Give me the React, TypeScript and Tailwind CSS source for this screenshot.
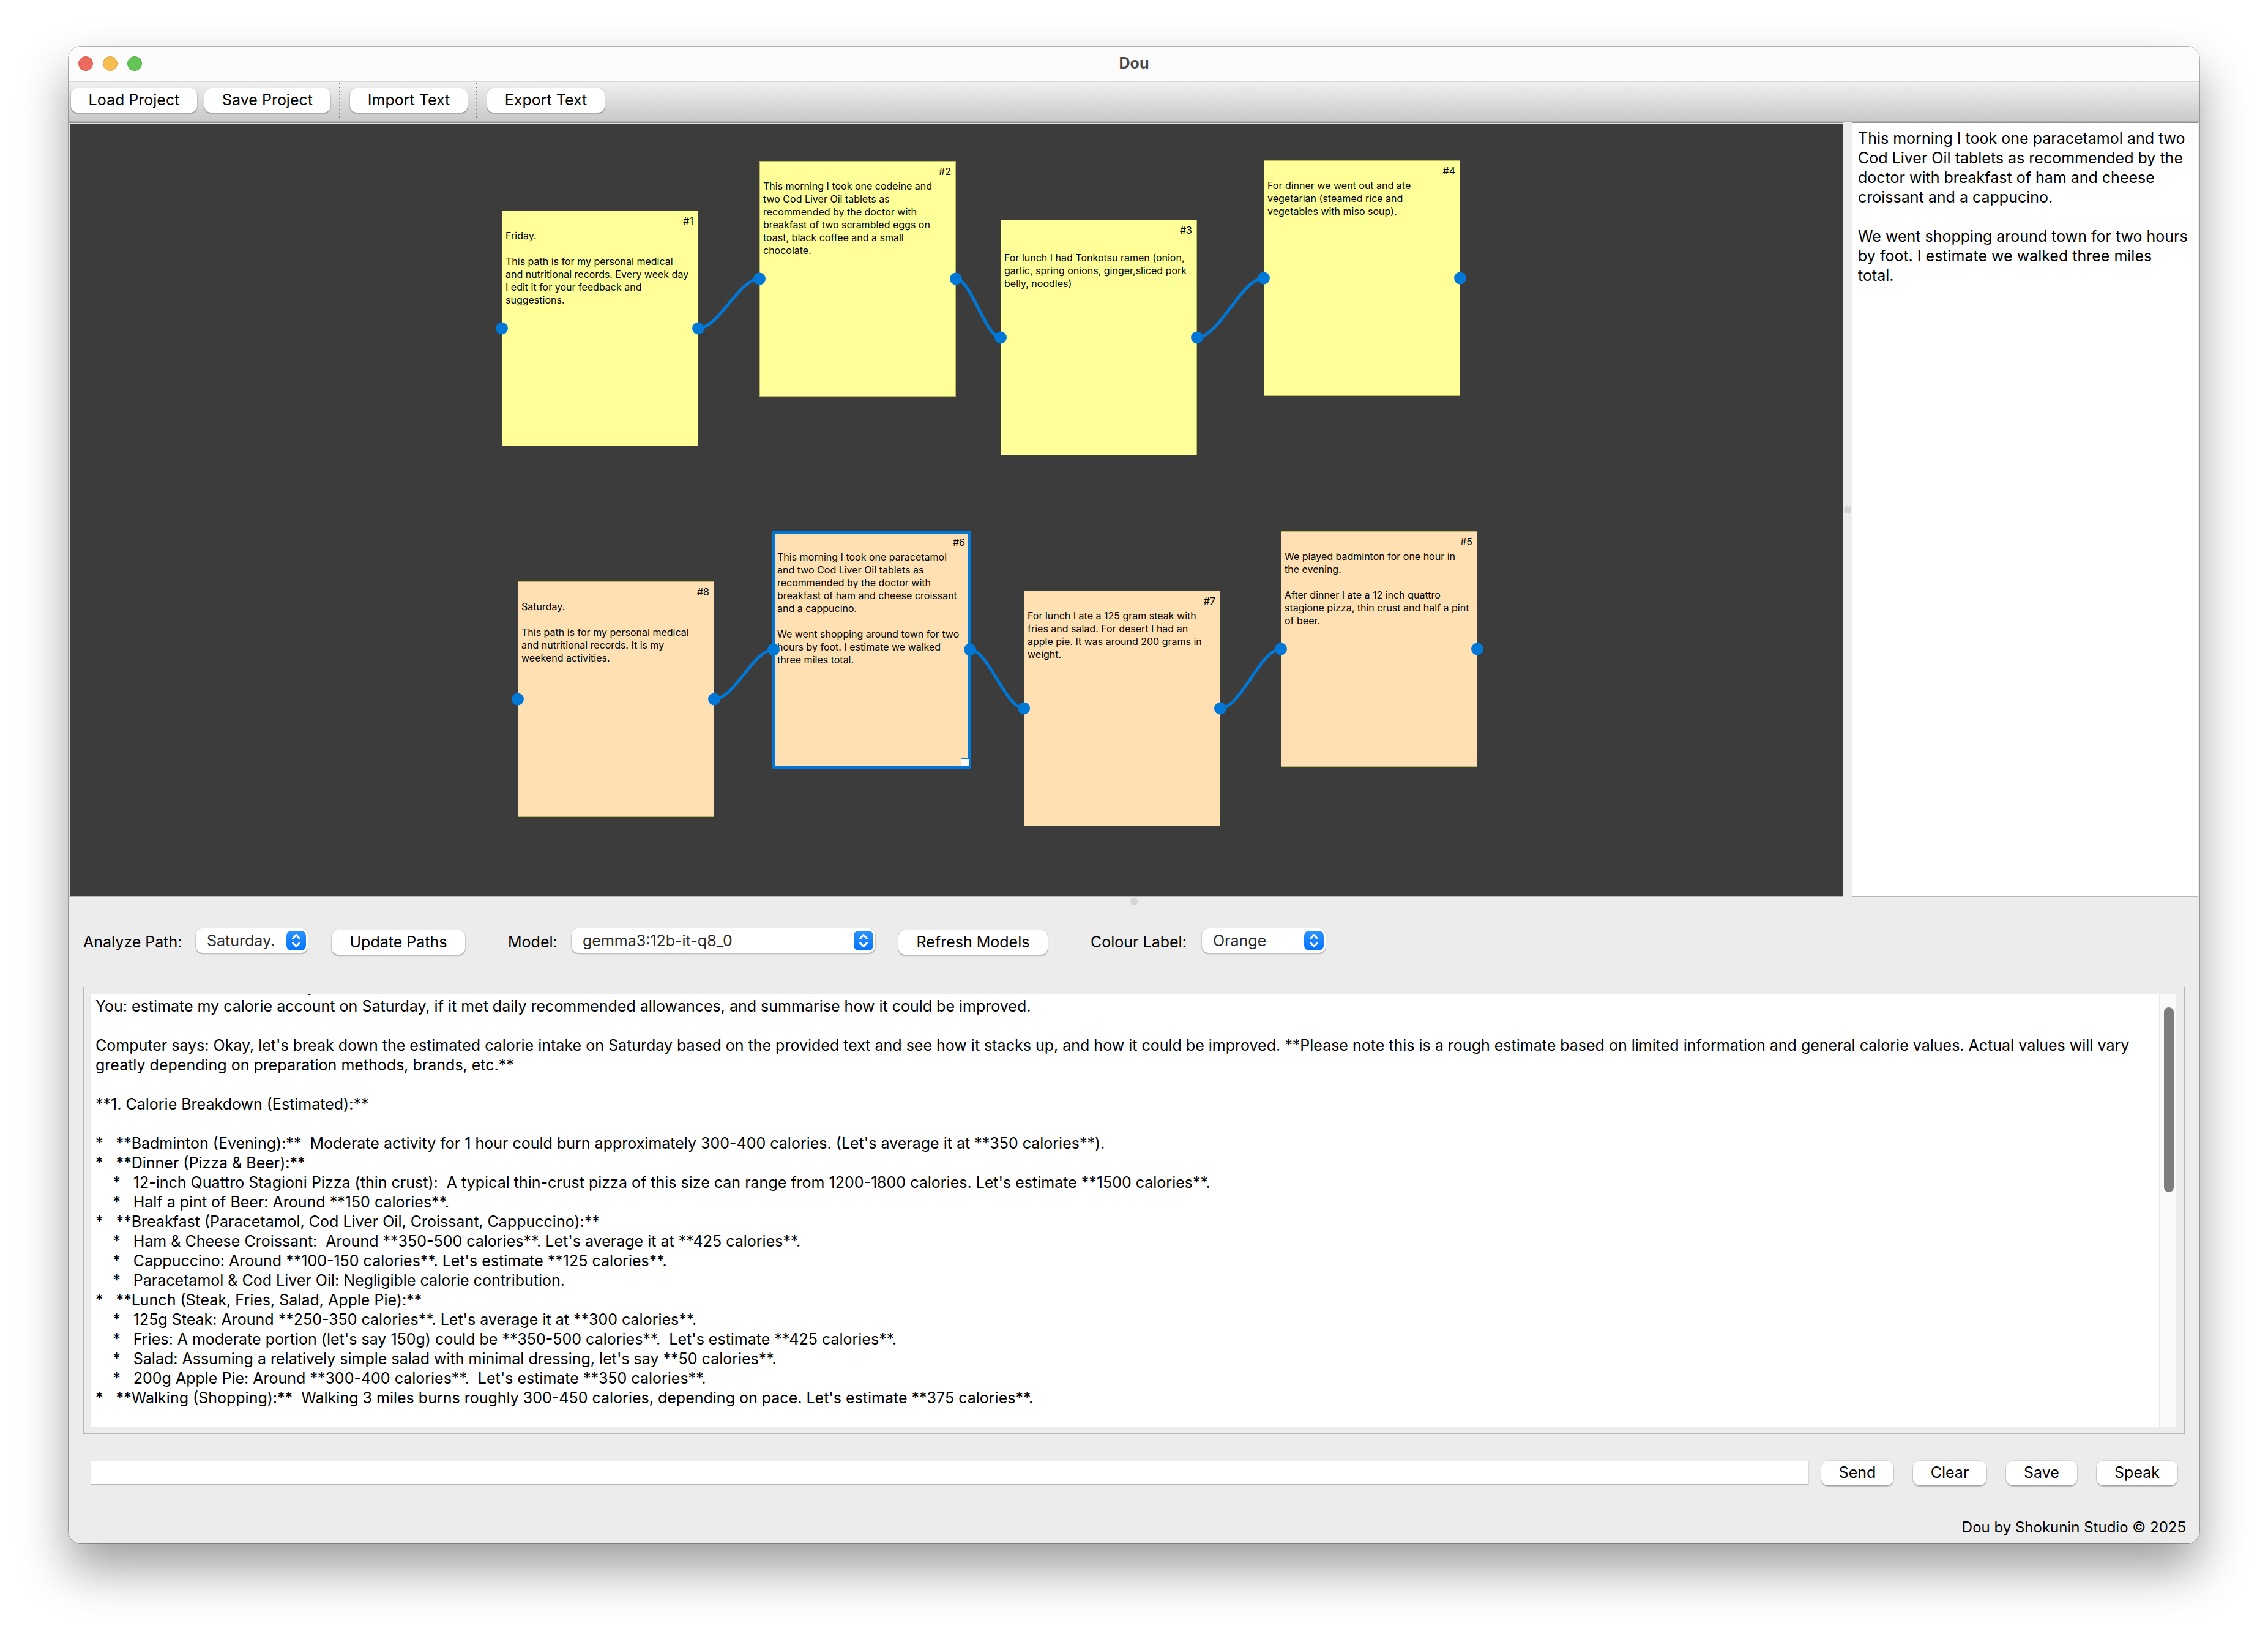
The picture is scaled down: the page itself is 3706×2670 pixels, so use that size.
import React from "react";

type Note = {
  id: number;
  x: number;
  y: number;
  tone: "yellow" | "orange";
  text: string;
  selected?: boolean;
};

const NOTE_W = 321;
const NOTE_H = 385;

const notes: Note[] = [
  {
    id: 1,
    x: 707,
    y: 143,
    tone: "yellow",
    text: "Friday.\n\nThis path is for my personal medical\nand nutritional records. Every week day\nI edit it for your feedback and\nsuggestions.",
  },
  {
    id: 2,
    x: 1128,
    y: 62,
    tone: "yellow",
    text: "This morning I took one codeine and\ntwo Cod Liver Oil tablets as\nrecommended by the doctor with\nbreakfast of two scrambled eggs on\ntoast, black coffee and a small\nchocolate.",
  },
  {
    id: 3,
    x: 1522,
    y: 158,
    tone: "yellow",
    text: "\nFor lunch I had Tonkotsu ramen (onion,\ngarlic, spring onions, ginger,sliced pork\nbelly, noodles)",
  },
  {
    id: 4,
    x: 1952,
    y: 61,
    tone: "yellow",
    text: "For dinner we went out and ate\nvegetarian (steamed rice and\nvegetables with miso soup).",
  },
  {
    id: 8,
    x: 733,
    y: 749,
    tone: "orange",
    text: "Saturday.\n\nThis path is for my personal medical\nand nutritional records. It is my\nweekend activities.",
  },
  {
    id: 6,
    x: 1151,
    y: 668,
    tone: "orange",
    selected: true,
    text: "This morning I took one paracetamol\nand two Cod Liver Oil tablets as\nrecommended by the doctor with\nbreakfast of ham and cheese croissant\nand a cappucino.\n\nWe went shopping around town for two\nhours by foot. I estimate we walked\nthree miles total.",
  },
  {
    id: 7,
    x: 1560,
    y: 764,
    tone: "orange",
    text: "For lunch I ate a 125 gram steak with\nfries and salad. For desert I had an\napple pie. It was around 200 grams in\nweight.",
  },
  {
    id: 5,
    x: 1980,
    y: 667,
    tone: "orange",
    text: "We played badminton for one hour in\nthe evening.\n\nAfter dinner I ate a 12 inch quattro\nstagione pizza, thin crust and half a pint\nof beer.",
  },
];

const links: [number, number][] = [
  [1, 2],
  [2, 3],
  [3, 4],
  [8, 6],
  [6, 7],
  [7, 5],
];

const selectedText =
  "This morning I took one paracetamol and two Cod Liver Oil tablets as recommended by the doctor with breakfast of ham and cheese croissant and a cappucino.\n\nWe went shopping around town for two hours by foot. I estimate we walked three miles total.";

const chat = [
  "You: estimate my calorie account on Saturday, if it met daily recommended allowances, and summarise how it could be improved.",
  "",
  "Computer says: Okay, let's break down the estimated calorie intake on Saturday based on the provided text and see how it stacks up, and how it could be improved. **Please note this is a rough estimate based on limited information and general calorie values. Actual values will vary greatly depending on preparation methods, brands, etc.**",
  "",
  "**1. Calorie Breakdown (Estimated):**",
  "",
  "*   **Badminton (Evening):**  Moderate activity for 1 hour could burn approximately 300-400 calories. (Let's average it at **350 calories**).",
  "*   **Dinner (Pizza & Beer):**",
  "    *   12-inch Quattro Stagioni Pizza (thin crust):  A typical thin-crust pizza of this size can range from 1200-1800 calories. Let's estimate **1500 calories**.",
  "    *   Half a pint of Beer: Around **150 calories**.",
  "*   **Breakfast (Paracetamol, Cod Liver Oil, Croissant, Cappuccino):**",
  "    *   Ham & Cheese Croissant:  Around **350-500 calories**. Let's average it at **425 calories**.",
  "    *   Cappuccino: Around **100-150 calories**. Let's estimate **125 calories**.",
  "    *   Paracetamol & Cod Liver Oil: Negligible calorie contribution.",
  "*   **Lunch (Steak, Fries, Salad, Apple Pie):**",
  "    *   125g Steak: Around **250-350 calories**. Let's average it at **300 calories**.",
  "    *   Fries: A moderate portion (let's say 150g) could be **350-500 calories**.  Let's estimate **425 calories**.",
  "    *   Salad: Assuming a relatively simple salad with minimal dressing, let's say **50 calories**.",
  "    *   200g Apple Pie: Around **300-400 calories**.  Let's estimate **350 calories**.",
  "*   **Walking (Shopping):**  Walking 3 miles burns roughly 300-450 calories, depending on pace. Let's estimate **375 calories**.",
].join("\n");

function PushButton({ className = "", children }: { className?: string; children: React.ReactNode }) {
  return (
    <button
      type="button"
      className={`h-10 shrink-0 rounded-[11px] bg-white pb-[2px] text-center whitespace-nowrap text-black shadow-[0_0_0_1px_rgba(0,0,0,0.08),0_2px_2px_rgba(0,0,0,0.26)] ${className}`}
    >
      {children}
    </button>
  );
}

function Combo({ id, options, className }: { id: string; options: string[]; className: string }) {
  return (
    <div className={`relative h-10 shrink-0 self-start ${className}`}>
      <select
        id={id}
        className="h-full w-full appearance-none rounded-[11px] bg-white pr-10 pl-[18px] text-[#2b2b2b] shadow-[0_0_0_1px_rgba(0,0,0,0.08),0_2px_2px_rgba(0,0,0,0.26)]"
      >
        {options.map((o) => (
          <option key={o}>{o}</option>
        ))}
      </select>
      <span className="pointer-events-none absolute top-1 right-[3px] size-8 rounded-[8px] bg-gradient-to-b from-[#2b92ff] to-[#0073ff]">
        <svg viewBox="0 0 32 32" className="size-8" fill="none" stroke="white" strokeWidth="3" strokeLinecap="round" strokeLinejoin="round" aria-hidden="true">
          <path d="M10.5 12.5 16 6.5l5.5 6M10.5 19.5 16 25.500l5.500-6" />
        </svg>
      </span>
    </div>
  );
}

function NoteCard({ note }: { note: Note }) {
  const fill = note.tone === "yellow" ? "bg-[#ffff99]" : "bg-[#ffe0b2]";
  return (
    <article
      className={`absolute h-[385px] w-[321px] border border-[#b9b960] ${fill} text-[16px] leading-[21px] text-black`}
      style={{ left: note.x, top: note.y }}
    >
      <p className="pt-[6px] pr-[7px] text-right">#{note.id}</p>
      <p className="pt-[3px] pl-[5px] whitespace-pre">{note.text}</p>
      {note.selected && (
        <>
          <span className="absolute -inset-[3px] rounded-[2px] border-[5px] border-[#0078d7]" />
          <span className="absolute right-0 bottom-0 size-[14px] border border-[#0078d7] bg-white" />
        </>
      )}
    </article>
  );
}

function Canvas() {
  const find = (id: number) => notes.find((n) => n.id === id)!;
  return (
    <section
      aria-label="Notes canvas"
      className="relative min-h-[1180px] min-w-0 flex-1 overflow-hidden border border-[#b5b5b5] border-t-[#8e8e8e] bg-[#3c3c3c] shadow-[inset_1px_1px_0_#e4e4e4]"
    >
      {notes.map((n) => (
        <NoteCard key={n.id} note={n} />
      ))}
      <svg className="pointer-events-none absolute top-0 left-0 h-full w-full" fill="none" aria-hidden="true">
        {links.map(([a, b]) => {
          const x0 = find(a).x + NOTE_W;
          const y0 = find(a).y + NOTE_H / 2;
          const x1 = find(b).x;
          const y1 = find(b).y + NOTE_H / 2;
          const c = (x1 - x0) / 3;
          return (
            <path
              key={`${a}-${b}`}
              d={`M${x0} ${y0}C${x0 + c} ${y0} ${x1 - c} ${y1} ${x1} ${y1}`}
              stroke="#0078d7"
              strokeWidth="5"
            />
          );
        })}
        {notes.map((n) => (
          <g key={n.id} fill="#0078d7">
            <circle cx={n.x} cy={n.y + NOTE_H / 2} r="10" />
            <circle cx={n.x + NOTE_W} cy={n.y + NOTE_H / 2} r="10" />
          </g>
        ))}
      </svg>
    </section>
  );
}

function ToolbarDivider() {
  return <span className="mt-[2px] h-14 w-[2px] bg-[repeating-linear-gradient(#777777_0_2px,transparent_2px_6px)]" />;
}

export default function App() {
  return (
    <div className="flex min-h-screen bg-white px-28 pt-[76px] pb-[148px] font-['Inter',sans-serif] text-[25px] leading-8 text-black">
      <main className="flex min-w-0 flex-1 flex-col overflow-hidden rounded-[20px] bg-[#ececec] shadow-[0_0_0_1px_rgba(0,0,0,0.28),0_42px_80px_rgba(0,0,0,0.38)]">
        <header className="relative flex h-[58px] shrink-0 items-center justify-center border-b-2 border-[#d8d8d8] bg-[#fcfcfc]">
          <div className="absolute left-4 flex gap-4">
            <button type="button" aria-label="Close" className="size-6 rounded-full border border-[#d9564b] bg-[#ed6a5f]" />
            <button type="button" aria-label="Minimise" className="size-6 rounded-full border border-[#dca23c] bg-[#f6be50]" />
            <button type="button" aria-label="Zoom" className="size-6 rounded-full border border-[#50a73f] bg-[#62c555]" />
          </div>
          <h1 className="pb-[2px] text-[25px] font-bold text-[#4a4a4a]">Dou</h1>
        </header>

        <nav className="flex h-[66px] shrink-0 items-start border-b-2 border-[#b0b0b0] bg-gradient-to-b from-[#efefef] to-[#c9c9c9] pl-1">
          <div className="flex gap-3 pt-[10px] pr-[14px]">
            <PushButton className="w-[206px]">Load Project</PushButton>
            <PushButton className="w-[206px]">Save Project</PushButton>
          </div>
          <ToolbarDivider />
          <div className="flex pt-[10px] pr-[14px] pl-4">
            <PushButton className="w-48">Import Text</PushButton>
          </div>
          <ToolbarDivider />
          <div className="flex pt-[10px] pl-4">
            <PushButton className="w-48">Export Text</PushButton>
          </div>
        </nav>

        <div className="flex flex-1 pr-[2px]">
          <Canvas />
          <div className="flex w-[14px] shrink-0 items-center justify-center">
            <span className="size-3 rounded-full bg-[#d4d4d4]" />
          </div>
          <textarea
            aria-label="Note text"
            defaultValue={selectedText}
            className="block w-[566px] shrink-0 resize-none overflow-hidden border border-[#b5b5b5] border-t-[#8e8e8e] bg-white py-[9px] pr-3 pl-[9px] outline-none"
          />
        </div>

        <div className="flex h-4 shrink-0 items-center justify-center">
          <span className="size-3 rounded-full bg-[#d4d4d4]" />
        </div>

        <form className="flex h-[131px] shrink-0 items-start px-6 pt-9">
          <label htmlFor="path" className="w-[184px] pt-[6px]">Analyze Path:</label>
          <Combo id="path" options={["Saturday.", "Friday."]} className="w-[183px]" />
          <PushButton className="mt-[3px] ml-[39px] w-[218px]">Update Paths</PushButton>
          <label htmlFor="model" className="ml-[70px] w-[104px] pt-[6px]">Model:</label>
          <Combo id="model" options={["gemma3:12b-it-q8_0"]} className="w-[496px]" />
          <PushButton className="mt-[3px] ml-[38px] w-[244px]">Refresh Models</PushButton>
          <label htmlFor="colour" className="ml-[70px] w-[182px] pt-[6px]">Colour Label:</label>
          <Combo id="colour" options={["Orange", "Yellow"]} className="w-[202px]" />
        </form>

        <section
          aria-label="Conversation"
          className="mx-6 shrink-0 border-t border-r-2 border-b-2 border-l border-t-[#8a8a8a] border-r-[#b5b5b5] border-b-[#b5b5b5] border-l-[#b5b5b5] pt-[11px] pr-3 pb-[9px] pl-[11px]"
        >
          <div className="flex overflow-hidden bg-white">
            <div className="-mt-7 min-w-0 flex-1 pr-6 pb-8 pl-2">
              <p className="pl-[346px]">y</p>
              <p className="whitespace-pre-wrap">{chat}</p>
            </div>
            <div className="w-7 shrink-0 border-l-2 border-[#e8e8e8] bg-[#fafafa] pt-[22px] pl-[6px]">
              <div className="h-[302px] w-4 rounded-full bg-[#7d7d7d]" />
            </div>
          </div>
        </section>

        <form className="flex shrink-0 gap-8 px-9 pt-11 pb-10">
          <div className="flex flex-1 gap-5">
            <input
              aria-label="Message"
              type="text"
              className="h-10 min-w-0 flex-1 border border-b-2 border-[#d8d8d8] border-b-[#b5b5b5] bg-white px-2 outline-none"
            />
            <PushButton className="w-[118px]">Send</PushButton>
          </div>
          <PushButton className="w-[120px]">Clear</PushButton>
          <PushButton className="w-[116px]">Save</PushButton>
          <PushButton className="w-[132px]">Speak</PushButton>
        </form>

        <footer className="h-[55px] shrink-0 border-t border-[#6e6e6e] pt-3 pr-[22px] text-right text-2xl leading-8">Dou by Shokunin Studio © 2025</footer>
      </main>
    </div>
  );
}
